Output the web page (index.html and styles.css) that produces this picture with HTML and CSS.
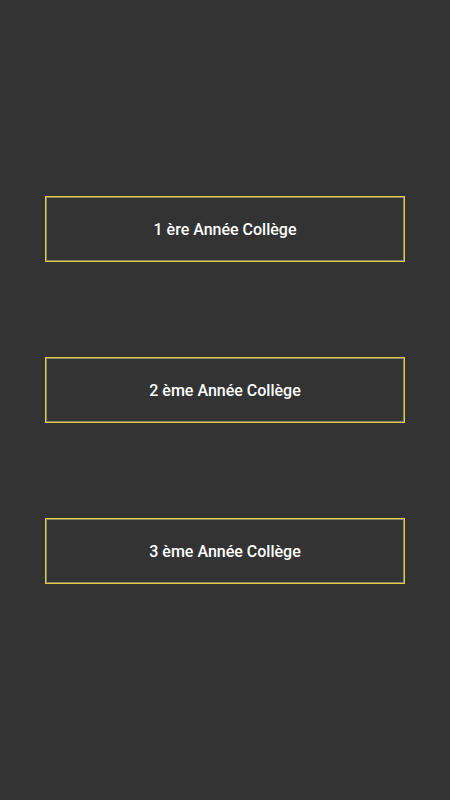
FILE: index.html
```html
<!DOCTYPE html>
<html>
<head>
<meta charset="utf-8">
<link rel="stylesheet" href="styles.css">
</head>
<body>
<main class="list">
  <div class="level">1 ère Année Collège</div>
  <div class="level">2 ème Année Collège</div>
  <div class="level">3 ème Année Collège</div>
</main>
</body>
</html>
```
FILE: styles.css
```css
html, body {
  margin: 0;
  padding: 0;
  background: #333333;
  height: 100%;
}
.list {
  display: flex;
  flex-direction: column;
  gap: 95px;
  padding: 196px 45px 0 45px;
}
.level {
  box-sizing: border-box;
  height: 66px;
  border: 1px solid #e2cd3c;
  box-shadow: inset 0 0 0 1px rgba(235, 228, 170, 0.45);
  display: flex;
  align-items: center;
  justify-content: center;
  color: #ffffff;
  font-family: Roboto, "Noto Sans", sans-serif;
  font-weight: 500;
  font-size: 16px;
}
```
